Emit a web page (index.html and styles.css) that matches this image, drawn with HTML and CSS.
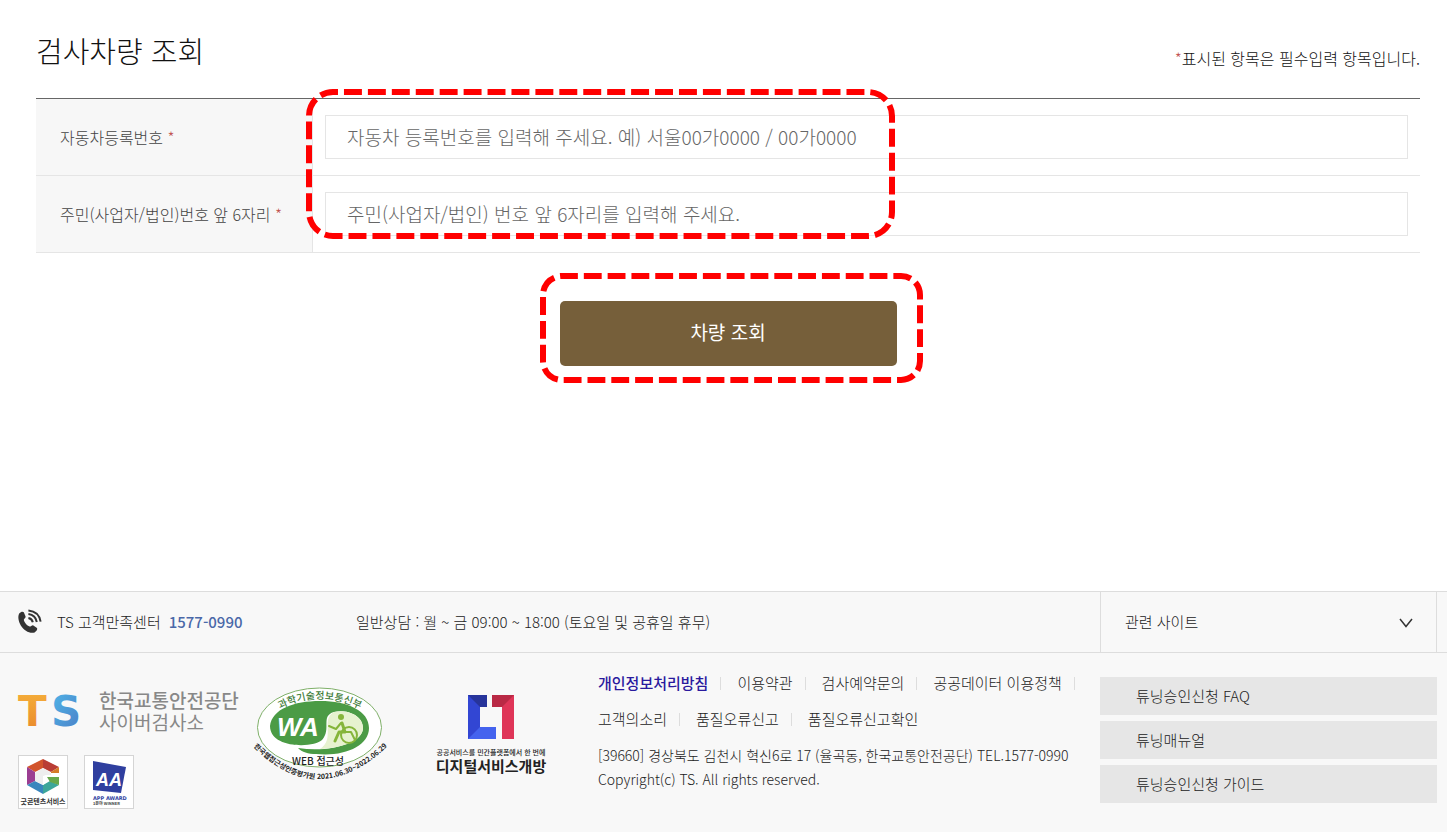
FILE: index.html
```
<!DOCTYPE html>
<html lang="ko">
<head>
    <meta charset="UTF-8">
    <meta name="viewport" content="width=device-width, initial-scale=1.0">
    <title>검사차량 조회</title>
    <link rel="stylesheet" href="styles.css">
</head>
<body>

    <main class="content">
        <div class="title-row">
            <h1>검사차량 조회</h1>
            <p class="notice"><span class="star">*</span>표시된 항목은 필수입력 항목입니다.</p>
        </div>

        <form class="search-form">
            <div class="table-wrap">
                <table class="form-table">
                    <tr>
                        <th scope="row"><label for="carNo">자동차등록번호 <span class="star">*</span></label></th>
                        <td><input type="text" id="carNo" placeholder="자동차 등록번호를 입력해 주세요. 예) 서울00가0000 / 00가0000"></td>
                    </tr>
                    <tr>
                        <th scope="row"><label for="idNo">주민(사업자/법인)번호 앞 6자리 <span class="star">*</span></label></th>
                        <td><input type="text" id="idNo" placeholder="주민(사업자/법인) 번호 앞 6자리를 입력해 주세요."></td>
                    </tr>
                </table>
                <svg class="mark mark-input" width="589" height="150" viewBox="0 0 589 150">
                    <rect x="3" y="3" width="583" height="144" rx="24" pathLength="1416" stroke-dashoffset="13"/>
                </svg>
            </div>

            <div class="btn-wrap">
                <button type="button" class="btn-search">차량 조회</button>
                <svg class="mark mark-btn" width="383" height="110" viewBox="0 0 383 110">
                    <rect x="3" y="3" width="377" height="104" rx="19" pathLength="936" stroke-dashoffset="2"/>
                </svg>
            </div>
        </form>
    </main>

    <footer>
        <div class="foot-top">
            <div class="center-tel">
                <svg width="26" height="26" viewBox="0 0 26 26" fill="none" stroke="#333">
                    <path d="M2.2 4.6C4 2.6 5.6 2.2 6.8 3.2L8.6 7.4C8.9 8.8 7 9.6 6.8 10.8C7.2 13.6 10 16.6 12.6 17.6C14 17.6 14.8 16 16 16.2L20 19C20.8 20.2 19.6 22.2 17.6 23.4C13 25 7 21.6 3.8 16.4C1.4 12.4 0.6 7.6 2.2 4.6Z" fill="#333" stroke="none"/>
                    <path d="M11.4 9C13.6 9.4 15.2 10.8 15.8 13.2" stroke-width="2"/>
                    <path d="M11.4 5C16 5.6 19 8.6 19.8 13" stroke-width="2"/>
                    <path d="M11.4 1.4C18.2 2 22.6 6.4 23.6 12.6" stroke-width="2"/>
                </svg>
                <span>TS 고객만족센터</span>
                <strong>1577-0990</strong>
            </div>
            <p class="hours">일반상담 : 월 ~ 금 09:00 ~ 18:00 (토요일 및 공휴일 휴무)</p>
            <div class="related">
                <select aria-label="관련 사이트">
                    <option>관련 사이트</option>
                </select>
                <svg width="14" height="10" viewBox="0 0 14 10"><path d="M1 1L7 8.500L13 1" fill="none" stroke="#333" stroke-width="1.500"/></svg>
            </div>
        </div>

        <div class="foot-bottom">
            <div class="brand">
                <div class="brand-main">
                    <svg width="66" height="36" viewBox="0 0 66 36">
                        <defs>
                            <linearGradient id="gT" x1="0" y1="0" x2="0" y2="1"><stop offset="0" stop-color="#f6b23c"/><stop offset="1" stop-color="#e8852b"/></linearGradient>
                            <linearGradient id="gS" x1="0" y1="0" x2="1" y2="1"><stop offset="0" stop-color="#4fb8ea"/><stop offset="1" stop-color="#4b7cc4"/></linearGradient>
                        </defs>
                        <text x="0" y="33" class="ts" fill="url(#gT)">T</text>
                        <text x="33" y="33" class="ts" fill="url(#gS)">S</text>
                    </svg>
                    <p><b>한국교통안전공단</b><br>사이버검사소</p>
                </div>
                <div class="awards">
                    <svg width="50" height="54" viewBox="0 0 50 54">
                        <rect x="0.500" y="0.500" width="49" height="53" fill="#fff" stroke="#d5d5d5"/>
                        <path d="M25 4L9 12L17 17L25 13Z" fill="#d2542c"/>
                        <path d="M25 4L41 12L33 17L25 13Z" fill="#b93d35"/>
                        <path d="M9 12L17 17V26L9 30Z" fill="#9b3d92"/>
                        <path d="M9 30L17 26L25 30V39Z" fill="#3a86bd"/>
                        <path d="M25 39V30L32 26L41 30Z" fill="#3da69a"/>
                        <path d="M29 22H41V30L32 27Z" fill="#68a84b"/>
                        <path d="M33 17L41 12V18H33Z" fill="#d67b28"/>
                        <path d="M17 18L25 13L33 18V20H28L25 21V30L17 26Z" fill="#eee"/>
                        <path d="M25 21H41V22H29V27L25 30Z" fill="#fff"/>
                        <text x="25" y="49" class="award-name" text-anchor="middle">굿콘텐츠서비스</text>
                    </svg>
                    <svg width="50" height="54" viewBox="0 0 50 54">
                        <rect x="0.500" y="0.500" width="49" height="53" fill="#fff" stroke="#d5d5d5"/>
                        <path d="M9 6L42 12L37 38L9 35Z" fill="#2f3f9f"/>
                        <text x="12" y="31" class="aa">AA</text>
                        <text x="9" y="45" class="app-award">APP AWARD</text>
                        <text x="9" y="50" class="app-sub">1분야 WINNER</text>
                    </svg>
                </div>
            </div>

            <svg class="wa-mark" width="140" height="102" viewBox="0 0 140 102">
                <defs>
                    <path id="arcTop" d="M23 30Q69 2 117 30"/>
                    <path id="arcBottom" d="M2 62Q68 130 139 62"/>
                </defs>
                <ellipse cx="69.500" cy="44.500" rx="62" ry="39.500" fill="#fff" stroke="#7fb069"/>
                <path d="M20 43C22 26 44 18 70 18C98 18 119 28 119 45C119 63 94 74 66 71C58 71 52 69 48 65C80 70 113 60 113 45C113 32 96 26 84 29C70 33 82 46 72 57C64 65 20 66 20 43Z" fill="#4b9b45"/>
                <path d="M84 29C96 26 113 32 113 45C113 57 94 65 70 66C86 56 70 36 84 29Z" fill="#e6f2cf"/>
                <text x="27" y="53" class="wa-text">WA</text>
                <g fill="none" stroke="#85b53a" stroke-width="3" stroke-linecap="round" stroke-linejoin="round">
                    <circle cx="91" cy="34" r="3" fill="#85b53a" stroke="none"/>
                    <circle cx="99" cy="52" r="8" stroke-width="2"/>
                    <path d="M92 40L95 49H89L85 58"/>
                    <path d="M91 40L86 46L79 43" stroke-width="2"/>
                    <path d="M96 49H101L105 57" stroke-width="2"/>
                </g>
                <text class="wa-arc-top" text-anchor="middle"><textPath href="#arcTop" startOffset="50%">과학기술정보통신부</textPath></text>
                <text x="68" y="82" class="wa-web" text-anchor="middle">WEB 접근성</text>
                <text class="wa-arc-bottom" text-anchor="middle"><textPath href="#arcBottom" startOffset="50%">한국웹접근성인증평가원 2021.06.30~2022.06.29</textPath></text>
            </svg>

            <div class="digital">
                <svg width="46" height="44" viewBox="0 0 46 44">
                    <path d="M0 0H19V12H12V32H28V44H0Z" fill="#3246d3"/>
                    <path d="M0 0H19V12H12Z" fill="#27349b"/>
                    <path d="M12 32H28V44H0Z" fill="#4463ee"/>
                    <path d="M24 0H46V44H34V12H24Z" fill="#df3558"/>
                    <path d="M24 0H46L34 12H24Z" fill="#b92945"/>
                </svg>
                <small>공공서비스를 민간플랫폼에서 한 번에</small>
                <b>디지털서비스개방</b>
            </div>

            <div class="info">
                <ul class="policy">
                    <li><a href="#" class="privacy">개인정보처리방침</a></li>
                    <li><a href="#">이용약관</a></li>
                    <li><a href="#">검사예약문의</a></li>
                    <li><a href="#">공공데이터 이용정책</a></li>
                </ul>
                <ul class="policy">
                    <li><a href="#">고객의소리</a></li>
                    <li><a href="#">품질오류신고</a></li>
                    <li><a href="#">품질오류신고확인</a></li>
                </ul>
                <address>[39660] 경상북도 김천시 혁신6로 17 (율곡동, 한국교통안전공단) TEL.1577-0990<br>Copyright(c) TS. All rights reserved.</address>
            </div>

            <nav class="quick">
                <a href="#">튜닝승인신청 FAQ</a>
                <a href="#">튜닝매뉴얼</a>
                <a href="#">튜닝승인신청 가이드</a>
            </nav>
        </div>
    </footer>

</body>
</html>
```
FILE: styles.css
```
* {
    box-sizing: border-box;
}

body {
    display: flex;
    flex-direction: column;
    min-height: 100vh;
    margin: 0;
    background-color: #fff;
    color: #222;
    font-family: "Noto Sans CJK KR", sans-serif;
    font-size: 15px;
    font-weight: 300;
    line-height: 24px;
}

h1, p, ul {
    margin: 0;
    padding: 0;
}

a {
    color: inherit;
    text-decoration: none;
}

input, select, button {
    font: inherit;
}

svg {
    overflow: visible;
}

.star {
    color: #c0504d;
}

/* search form */
.content {
    flex: 1;
    padding: 30px 27px 0 36px;
}

.title-row {
    display: flex;
    justify-content: space-between;
    align-items: flex-end;
    padding-bottom: 28px;
}

h1 {
    color: #111;
    font-size: 29px;
    font-weight: 300;
    line-height: 40px;
}

.notice {
    color: #111;
    font-size: 16px;
}

.table-wrap {
    position: relative;
}

.form-table {
    width: 100%;
    border-spacing: 0;
    border-top: 1px solid #666;
}

.form-table th {
    width: 277px;
    padding: 0 0 0 24px;
    background-color: #f7f7f7;
    border-right: 1px solid #e5e5e5;
    border-bottom: 1px solid #e5e5e5;
    color: #444;
    font-size: 16px;
    font-weight: 300;
    text-align: left;
}

.form-table td {
    padding: 16px 12px;
    border-bottom: 1px solid #e5e5e5;
}

.form-table input {
    display: block;
    width: 100%;
    height: 44px;
    padding: 0 21px 2px;
    border: 1px solid #e5e5e5;
    font-size: 19px;
}

.form-table input::placeholder {
    color: #666;
}

.btn-wrap {
    position: relative;
    display: flex;
    justify-content: center;
    padding-top: 48px;
}

.btn-search {
    width: 337px;
    height: 65px;
    padding-bottom: 4px;
    border: none;
    border-radius: 5px;
    background-color: #765f3a;
    color: #fff;
    font-size: 19px;
    font-weight: 400;
    cursor: pointer;
}

/* dashed guide boxes */
.mark {
    position: absolute;
    pointer-events: none;
    fill: none;
    stroke: #f00;
    stroke-width: 6;
    stroke-dasharray: 18 6;
}

.mark-input {
    top: -9px;
    left: 270px;
}

.mark-btn {
    top: 20px;
    left: calc(50% - 188px);
}

/* footer */
footer {
    min-height: 241px;
    border-top: 1px solid #ddd;
    background-color: #f8f8f8;
}

.foot-top {
    display: flex;
    align-items: center;
    height: 61px;
    padding: 0 10px 0 17px;
    border-bottom: 1px solid #ddd;
}

.center-tel {
    display: flex;
    align-items: center;
    width: 339px;
}

.center-tel svg {
    margin-right: 14px;
}

.center-tel strong {
    margin-left: 8px;
    color: #4a68a8;
    font-weight: 500;
}

.hours {
    flex: 1;
}

.related {
    position: relative;
    width: 337px;
    height: 60px;
}

.related select {
    width: 100%;
    height: 100%;
    padding: 0 24px;
    border: 1px solid #ddd;
    border-width: 0 1px;
    border-radius: 0;
    background: none;
    color: #222;
    appearance: none;
}

.related svg {
    position: absolute;
    top: 26px;
    right: 24px;
    pointer-events: none;
}

.foot-bottom {
    display: grid;
    grid-template-columns: 232px 182px 166px minmax(0, 1fr) 337px;
    align-items: start;
    padding: 18px 10px 20px 18px;
}

.brand-main {
    display: flex;
    gap: 15px;
    padding-top: 18px;
    color: #888;
    font-size: 19px;
    font-weight: 400;
    line-height: 22px;
}

.brand-main svg {
    margin-top: 4px;
}

.brand-main b {
    font-weight: 500;
}

.ts {
    font: bold 42px "DejaVu Sans", sans-serif;
}

.awards {
    display: flex;
    gap: 16px;
    padding-top: 22px;
}

.award-name {
    font-size: 7px;
    font-weight: 700;
    fill: #333;
}

.aa {
    font: italic bold 18px "Liberation Sans", sans-serif;
    fill: #fff;
}

.app-award {
    font: bold 5px "DejaVu Sans", sans-serif;
    fill: #2f3f9f;
}

.app-sub {
    font-size: 4px;
    font-weight: 700;
    fill: #444;
}

.wa-mark {
    margin-top: 12px;
}

.wa-text {
    font: italic bold 26px "Liberation Sans", sans-serif;
    fill: #fff;
}

.wa-arc-top {
    font-size: 10px;
    font-weight: 500;
    fill: #3f7d3a;
}

.wa-web {
    font-size: 10px;
    font-weight: 500;
    fill: #222;
}

.wa-arc-bottom {
    font-size: 7px;
    font-weight: 700;
    fill: #222;
}

.digital {
    display: flex;
    flex-direction: column;
    align-items: center;
    width: 118px;
    margin-top: 24px;
    white-space: nowrap;
}

.digital small {
    margin-top: 8px;
    font-size: 7px;
    font-weight: 500;
    line-height: 10px;
}

.digital b {
    font-weight: 700;
    line-height: 18px;
}

.policy {
    display: flex;
    list-style: none;
    margin-bottom: 12px;
}

.policy li {
    display: flex;
    align-items: center;
}

.policy li:not(:last-child)::after,
.policy:first-child li::after {
    content: "";
    width: 1px;
    height: 13px;
    margin: 0 16px 0 12px;
    background-color: #ddd;
}

.policy .privacy {
    color: #2a1a9e;
    font-weight: 500;
}

address {
    font-size: 14px;
    font-style: normal;
    white-space: nowrap;
}

.quick {
    display: flex;
    flex-direction: column;
    gap: 6px;
    padding-top: 6px;
}

.quick a {
    height: 38px;
    padding-left: 36px;
    background-color: #e6e6e6;
    line-height: 38px;
}
```
